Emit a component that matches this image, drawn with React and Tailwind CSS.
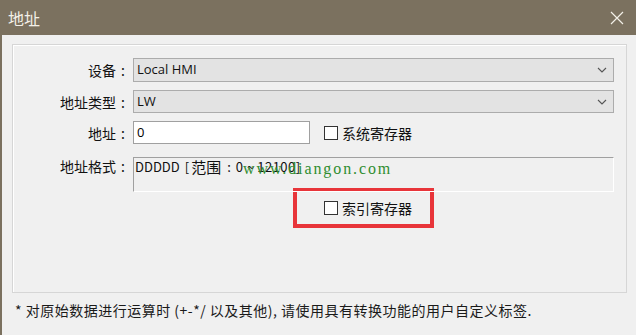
import React from 'react';

const cjk = "font-['Noto_Sans_CJK_SC','Noto_Sans',sans-serif]";

function Chevron() {
  return (
    <svg width="10" height="6" viewBox="0 0 10 6" className="mr-[6px]">
      <path d="M1 1l4 4 4-4" fill="none" stroke="#555" strokeWidth="1.1" />
    </svg>
  );
}

function Label({ text }) {
  return (
    <div className="w-[120px] shrink-0 flex justify-end items-center text-[14px] leading-[18px] text-[#111]">
      <span>{text}</span>
      <span className="ml-[5px] mr-[8px]">:</span>
    </div>
  );
}

function Select({ value, h }) {
  return (
    <div className={`w-[481px] ${h} flex items-center justify-between bg-[#e3e3e3] border border-[#acacac]`}>
      <span className="pl-[3px] text-[13px] font-['Open_Sans',sans-serif] text-[#111]">{value}</span>
      <Chevron />
    </div>
  );
}

function Check({ label }) {
  return (
    <div className="flex items-center">
      <div className="w-[14px] h-[14px] bg-white border border-[#333]" />
      <span className="ml-[4px] text-[14px] leading-[18px] text-[#111]">{label}</span>
    </div>
  );
}

export default function App() {
  return (
    <div className={`w-[636px] h-[335px] bg-[#f0f0f0] flex flex-col border-l-2 border-[#7b715f] overflow-hidden ${cjk}`}>
      {/* title bar */}
      <div className="h-[35px] shrink-0 bg-[#7b715f] flex items-center justify-between pl-[6px] pr-[12px]">
        <span className="text-[16px] text-[#f3f0e8]">地址</span>
        <svg width="14" height="14" viewBox="0 0 14 14">
          <path d="M1 1l12 12M13 1L1 13" stroke="#f3f0e8" strokeWidth="1.2" />
        </svg>
      </div>

      <div className="pt-[9px]">
        {/* group box */}
        <div className="ml-[10px] w-[615px] h-[249px] border border-[#d6d6d6] shadow-[inset_1px_1px_0_#ffffff] pt-[13px] flex flex-col">
          <div className="flex items-center h-[24px]">
            <Label text="设备" />
            <Select value="Local HMI" h="h-[24px]" />
          </div>

          <div className="flex items-center h-[23px] mt-[8px]">
            <Label text="地址类型" />
            <Select value="LW" h="h-[23px]" />
          </div>

          <div className="flex items-center h-[23px] mt-[8px]">
            <Label text="地址" />
            <div className="w-[177px] h-[23px] bg-white border border-[#a0a0a0] flex items-center pl-[3px] text-[13px] font-['Open_Sans',sans-serif]">0</div>
            <div className="ml-[14px]">
              <Check label="系统寄存器" />
            </div>
          </div>

          <div className="flex items-start h-[35px] mt-[13px]">
            <div className="w-[120px] shrink-0 flex justify-end text-[14px] leading-[18px] text-[#111]">
              <span>地址格式</span>
              <span className="ml-[5px] mr-[8px]">:</span>
            </div>
            <div className="relative w-[481px] h-[35px] border border-t-[#a0a0a0] border-l-[#a0a0a0] border-b-white border-r-white">
              <div className="flex items-center h-[18px] pl-[1px] text-[13px] text-[#111]">
                <span>DDDDD</span>
                <span className="ml-[5px]">[</span>
                <span className="ml-[2px] text-[15px]">范围</span>
                <span className="ml-[6px]">:</span>
                <span className="ml-[5px]">0</span>
                <span className="ml-[4px]">~</span>
                <span className="ml-[3px] tracking-[0.5px]">12100]</span>
              </div>
              <span className="absolute left-[109px] top-[1px] text-[16px] leading-[20px] tracking-[1.9px] text-[#2f8d2f] font-['Liberation_Serif',serif]">www.diangon.com</span>
            </div>
          </div>

          <div className="-mt-[4px] ml-[280px] w-[141px] h-[40px] border-4 border-[#e8353a] flex items-center pl-[27px]">
            <Check label="索引寄存器" />
          </div>
        </div>
      </div>

      <div className="pl-[13px] pt-[8px] text-[14px] leading-[18px] tracking-[0.5px] text-[#1a1a1a]">
        * 对原始数据进行运算时 (+-*/ 以及其他), 请使用具有转换功能的用户自定义标签.
      </div>
    </div>
  );
}
